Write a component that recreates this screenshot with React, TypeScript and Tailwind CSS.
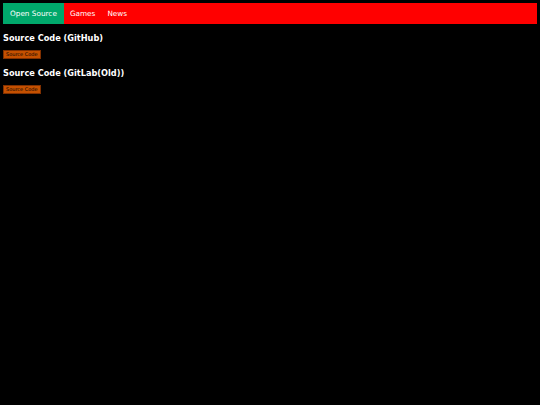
export default function App() {
  const repos = [
    { title: "Source Code (GitHub)" },
    { title: "Source Code (GitLab(Old))" },
  ];

  return (
    <div className="min-h-[405px] bg-black p-[3px] text-white font-['DejaVu_Sans',sans-serif]">
      <nav className="flex h-[21px] bg-[#ff0000]">
        <a className="flex items-center bg-[#00a86b] px-[7px] pt-[2px] text-[7.3px] text-white">Open Source</a>
        <a className="flex items-center px-[6px] pt-[2px] text-[7.3px] text-white">Games</a>
        <a className="flex items-center px-[6px] pt-[2px] text-[7.3px] text-white">News</a>
      </nav>
      {repos.map((repo) => (
        <section key={repo.title}>
          <h2 className="mt-[9px] text-[8.2px] font-bold leading-[10px]">{repo.title}</h2>
          <button className="mt-[7px] mb-[1px] block h-[9px] border border-[#803000] bg-[#c45000] px-[2px] text-[5px] leading-[7px] text-black">
            Source Code
          </button>
        </section>
      ))}
    </div>
  );
}
